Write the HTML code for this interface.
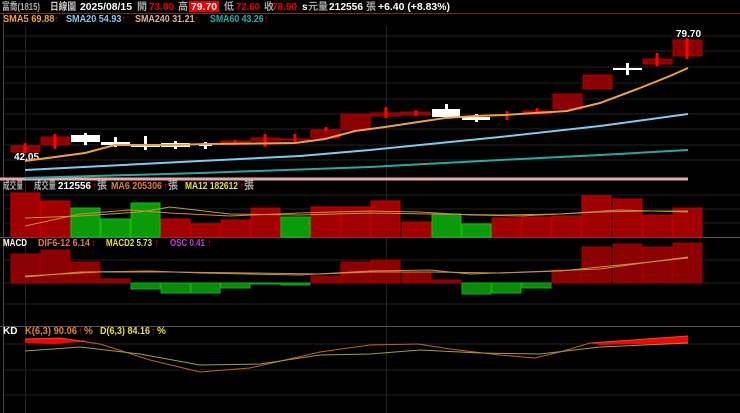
<!DOCTYPE html>
<html><head><meta charset="utf-8"><style>
html,body{margin:0;padding:0;background:#000;width:740px;height:413px;overflow:hidden}
svg{display:block}
text{font-family:"Liberation Sans","Noto Sans CJK TC",sans-serif;font-size:10px;font-weight:bold}
</style></head><body>
<svg width="740" height="413" viewBox="0 0 740 413">
<rect width="740" height="413" fill="#000"/>
<!-- header -->
<text x="2" y="10" fill="#aaa" font-weight="normal" font-size="9" textLength="38" lengthAdjust="spacingAndGlyphs">富喬(1815)</text>
<text x="50" y="10" fill="#ccc" font-weight="normal" textLength="26" lengthAdjust="spacingAndGlyphs">日線圖</text>
<text x="80" y="10" fill="#fff" font-size="11" textLength="52" lengthAdjust="spacingAndGlyphs">2025/08/15</text>
<text x="137" y="10" fill="#aaa" font-weight="normal">開</text>
<text x="149" y="10" fill="#e00" font-size="11" textLength="25" lengthAdjust="spacingAndGlyphs">73.80</text>
<text x="178" y="10" fill="#aaa" font-weight="normal">高</text>
<rect x="189" y="1" width="30" height="11" fill="#e00"/>
<text x="191" y="10" fill="#fff" font-size="11" textLength="26" lengthAdjust="spacingAndGlyphs">79.70</text>
<text x="224" y="10" fill="#aaa" font-weight="normal">低</text>
<text x="236" y="10" fill="#e00" font-size="11" textLength="24" lengthAdjust="spacingAndGlyphs">72.60</text>
<text x="264" y="10" fill="#aaa" font-weight="normal">收</text>
<text x="272" y="10" fill="#e00" font-size="11" textLength="25" lengthAdjust="spacingAndGlyphs">78.90</text>
<text x="302" y="10" fill="#fff">s</text>
<text x="308" y="10" fill="#aaa" font-weight="normal">元</text>
<text x="318" y="10" fill="#aaa" font-weight="normal">量</text>
<text x="329" y="10" fill="#fff" font-size="11" textLength="34" lengthAdjust="spacingAndGlyphs">212556</text>
<text x="366" y="10" fill="#aaa" font-weight="normal">張</text>
<text x="378" y="10" fill="#fff" font-size="11" textLength="72" lengthAdjust="spacingAndGlyphs">+6.40 (+8.83%)</text>
<line x1="0" y1="13.5" x2="740" y2="13.5" stroke="#7a2a2a"/>
<text x="3" y="22" fill="#f0a040" font-size="9.5" textLength="56" lengthAdjust="spacingAndGlyphs">SMA5 69.88<tspan fill="#e00">↑</tspan></text>
<text x="66" y="22" fill="#7ecbf0" font-size="9.5" textLength="60" lengthAdjust="spacingAndGlyphs">SMA20 54.93<tspan fill="#e00">↑</tspan></text>
<text x="135" y="22" fill="#e0b0a0" font-size="9.5" textLength="64" lengthAdjust="spacingAndGlyphs">SMA240 31.21<tspan fill="#e00">↑</tspan></text>
<text x="210" y="22" fill="#2ab0a8" font-size="9.5" textLength="58" lengthAdjust="spacingAndGlyphs">SMA60 43.26<tspan fill="#e00">↑</tspan></text>
<!-- grid -->
<g stroke="#222" stroke-width="1">
<line x1="3" y1="36" x2="740" y2="36"/><line x1="3" y1="51" x2="740" y2="51"/><line x1="3" y1="67" x2="740" y2="67"/><line x1="3" y1="83" x2="740" y2="83"/><line x1="3" y1="99" x2="740" y2="99"/><line x1="3" y1="114" x2="740" y2="114"/><line x1="3" y1="129" x2="740" y2="129"/><line x1="3" y1="145" x2="740" y2="145"/><line x1="3" y1="160" x2="740" y2="160"/>
<line x1="3" y1="209" x2="740" y2="209"/><line x1="3" y1="223" x2="740" y2="223"/><line x1="3" y1="195" x2="740" y2="195"/>
<line x1="3" y1="260" x2="740" y2="260"/><line x1="3" y1="283" x2="740" y2="283"/><line x1="3" y1="304" x2="740" y2="304"/>
<line x1="3" y1="344" x2="740" y2="344"/><line x1="3" y1="370" x2="740" y2="370"/><line x1="3" y1="395" x2="740" y2="395"/>
<line x1="25.5" y1="26" x2="25.5" y2="413"/><line x1="386.5" y1="26" x2="386.5" y2="413"/>
</g>
<line x1="3.5" y1="14" x2="3.5" y2="413" stroke="#444"/>
<line x1="0" y1="179" x2="688" y2="179" stroke="#e8a8a8" stroke-width="3"/>
<line x1="0" y1="237.5" x2="740" y2="237.5" stroke="#555"/>
<line x1="0" y1="326.5" x2="740" y2="326.5" stroke="#555"/>
<!-- candles -->
<g fill="#8b0000" stroke="#b00000" stroke-width="1">
<rect x="11" y="146" width="29" height="6"/><rect x="41" y="137" width="29" height="8"/>
<rect x="221" y="141" width="29" height="2"/><rect x="251" y="138" width="29" height="3"/><rect x="281" y="139" width="29" height="1"/>
<rect x="311" y="130" width="29" height="8"/><rect x="341" y="114" width="29" height="16"/><rect x="371" y="113" width="29" height="3"/><rect x="401" y="112" width="29" height="3"/><rect x="523" y="111" width="28" height="3"/><rect x="553" y="94" width="29" height="15"/><rect x="583" y="75" width="29" height="14"/><rect x="643" y="59" width="29" height="5"/><rect x="673" y="40" width="29" height="16"/>
</g>
<g stroke="#f00" stroke-width="3">
<line x1="25" y1="143" x2="25" y2="153"/><line x1="55" y1="134" x2="55" y2="149"/><line x1="235" y1="140" x2="235" y2="145"/><line x1="265" y1="134" x2="265" y2="147"/><line x1="295" y1="134" x2="295" y2="142"/><line x1="326" y1="127" x2="326" y2="131"/><line x1="386" y1="107" x2="386" y2="118"/><line x1="416" y1="110" x2="416" y2="116"/><line x1="507" y1="111" x2="507" y2="120"/><line x1="537" y1="108" x2="537" y2="112"/><line x1="657" y1="53" x2="657" y2="66"/><line x1="687" y1="38" x2="687" y2="59"/>
</g>
<g fill="#fff">
<rect x="71" y="135" width="29" height="7"/><rect x="84" y="133" width="3" height="12"/>
<rect x="101" y="142" width="29" height="3"/><rect x="114" y="137" width="3" height="10"/>
<rect x="131" y="145" width="29" height="2"/><rect x="144" y="136" width="3" height="14"/>
<rect x="161" y="143" width="29" height="4"/><rect x="174" y="141" width="3" height="8"/>
<rect x="204" y="142" width="3" height="7"/><rect x="199" y="145" width="13" height="1"/>
<rect x="432" y="109" width="28" height="8"/><rect x="445" y="104" width="3" height="13"/>
<rect x="462" y="117" width="28" height="3"/><rect x="475" y="114" width="3" height="8"/>
<rect x="613" y="68" width="29" height="2"/><rect x="626" y="63" width="3" height="12"/>
</g>
<text x="14" y="160" fill="#fff" font-weight="normal" font-size="9">42.05</text>
<text x="676" y="37" fill="#fff" font-weight="normal" font-size="9">79.70</text>
<!-- MAs -->
<polyline fill="none" stroke="#2aa8a0" stroke-width="2" points="25,178 200,173 370,167 500,160 600,155 688,150"/>
<polyline fill="none" stroke="#7ecbf0" stroke-width="2" points="25,170 200,161 300,156 370,150 500,137 600,126 688,114"/>
<polyline fill="none" stroke="#f0a040" stroke-width="2" points="25,161 85,153 115,145 175,145 205,144 295,143 325,139 355,131 385,127 445,118 475,116 505,115 535,113 567,111 600,103 640,88 670,76 688,68"/>
<!-- volume -->
<text x="3" y="189" fill="#aaa" font-weight="normal" font-size="8" textLength="20" lengthAdjust="spacingAndGlyphs">成交量</text>
<text x="34" y="189" fill="#aaa" font-weight="normal" font-size="9" textLength="22" lengthAdjust="spacingAndGlyphs">成交量</text>
<text x="58" y="189" fill="#fff" font-size="9" textLength="33" lengthAdjust="spacingAndGlyphs">212556</text>
<text x="92" y="189" fill="#e00" font-size="9">↑</text><text x="97" y="189" fill="#aaa" font-size="8">張</text>
<text x="111" y="189" fill="#e08040" font-size="9" textLength="51" lengthAdjust="spacingAndGlyphs">MA6 205306</text>
<text x="163" y="189" fill="#e00" font-size="9">↑</text><text x="168" y="189" fill="#aaa" font-size="8">張</text>
<text x="185" y="189" fill="#e8e040" font-size="9" textLength="53" lengthAdjust="spacingAndGlyphs">MA12 182612</text>
<text x="239" y="189" fill="#e00" font-size="9">↑</text><text x="244" y="189" fill="#aaa" font-size="8">張</text>
<g fill="#a00000" stroke="#c00000">
<rect x="11" y="193" width="29" height="44"/><rect x="41" y="201" width="29" height="36"/><rect x="161" y="219" width="29" height="18"/><rect x="191" y="224" width="29" height="13"/><rect x="221" y="220" width="29" height="17"/><rect x="251" y="208" width="29" height="29"/><rect x="311" y="207" width="29" height="30"/><rect x="341" y="207" width="29" height="30"/><rect x="371" y="201" width="29" height="36"/><rect x="402" y="222" width="29" height="15"/><rect x="492" y="218" width="29" height="19"/><rect x="522" y="217" width="29" height="20"/><rect x="552" y="216" width="29" height="21"/><rect x="582" y="196" width="29" height="41"/><rect x="613" y="199" width="29" height="38"/><rect x="643" y="215" width="29" height="22"/><rect x="673" y="208" width="29" height="29"/>
</g>
<g fill="#0a9a0a" stroke="#10c010">
<rect x="71" y="208" width="29" height="29"/><rect x="101" y="219" width="29" height="18"/><rect x="131" y="203" width="29" height="34"/><rect x="281" y="217" width="29" height="20"/><rect x="432" y="214" width="29" height="23"/><rect x="462" y="224" width="29" height="13"/>
</g>
<polyline fill="none" stroke="#e08040" stroke-width="1" points="25,226 80,214 130,210 170,213 230,216 300,213 370,211 420,212 470,215 520,216 560,214 600,212 650,211 688,211"/>
<polyline fill="none" stroke="#b0a030" stroke-width="1" points="25,218 80,216 140,212 170,207 230,214 300,215 370,213 430,214 500,215 560,214 620,210 688,212"/>
<!-- MACD -->
<text x="3" y="246" fill="#fff" font-size="9" textLength="24" lengthAdjust="spacingAndGlyphs">MACD</text>
<text x="38" y="246" fill="#e08040" font-size="9" textLength="52" lengthAdjust="spacingAndGlyphs">DIF6-12 6.14</text><text x="91" y="246" fill="#e00" font-size="9">↑</text>
<text x="106" y="246" fill="#e8e040" font-size="9" textLength="46" lengthAdjust="spacingAndGlyphs">MACD2 5.73</text><text x="154" y="246" fill="#e00" font-size="9">↑</text>
<text x="170" y="246" fill="#c040e0" font-size="9" textLength="35" lengthAdjust="spacingAndGlyphs">OSC 0.41</text><text x="207" y="246" fill="#e00" font-size="9">↑</text>
<g fill="#8b0000" stroke="#a00000">
<rect x="11" y="254" width="29" height="29"/><rect x="41" y="250" width="29" height="33"/><rect x="71" y="262" width="29" height="21"/><rect x="101" y="279" width="29" height="4"/><rect x="311" y="276" width="29" height="7"/><rect x="341" y="262" width="29" height="21"/><rect x="371" y="260" width="29" height="23"/><rect x="402" y="272" width="29" height="11"/><rect x="432" y="280" width="29" height="3"/><rect x="552" y="270" width="29" height="13"/><rect x="582" y="247" width="29" height="36"/><rect x="613" y="244" width="29" height="39"/><rect x="643" y="247" width="29" height="36"/><rect x="673" y="243" width="29" height="40"/>
</g>
<g fill="#0a8a0a" stroke="#10b010">
<rect x="131" y="283" width="29" height="6"/><rect x="161" y="283" width="29" height="10"/><rect x="191" y="283" width="29" height="10"/><rect x="221" y="283" width="29" height="5"/><rect x="251" y="283" width="29" height="1"/><rect x="281" y="283" width="29" height="2"/><rect x="462" y="283" width="29" height="11"/><rect x="492" y="283" width="29" height="10"/><rect x="522" y="283" width="29" height="5"/>
</g>
<polyline fill="none" stroke="#e08040" stroke-width="1" points="25,277 80,272 150,271 200,273 300,275 370,271 430,270 470,274 550,271 600,269 650,262 688,257"/>
<polyline fill="none" stroke="#b0a030" stroke-width="1" points="25,276 100,272 170,272 250,273 320,274 370,272 430,272 500,273 560,271 620,265 688,258"/>
<!-- KD -->
<text x="3" y="334" fill="#fff" font-size="9">KD</text>
<text x="25" y="334" fill="#e08040" font-size="9" textLength="52" lengthAdjust="spacingAndGlyphs">K(6,3) 90.06</text><text x="78" y="334" fill="#e00" font-size="9">↑</text><text x="84" y="334" fill="#e08040" font-size="9">%</text>
<text x="100" y="334" fill="#e8e040" font-size="9" textLength="50" lengthAdjust="spacingAndGlyphs">D(6,3) 84.16</text><text x="151" y="334" fill="#e00" font-size="9">↑</text><text x="157" y="334" fill="#e8e040" font-size="9">%</text>
<polygon fill="#f00" points="25,339 55,338 90,341 55,344 25,343"/>
<polygon fill="#f00" points="590,343 688,336 688,343 600,345"/>
<polyline fill="none" stroke="#c06030" stroke-width="1" points="25,339 60,338 100,344 150,360 200,372 250,368 320,352 370,345 418,344 450,349 500,355 535,358 560,352 590,343 688,336"/>
<polyline fill="none" stroke="#a0a030" stroke-width="1" points="25,351 80,347 140,354 200,365 260,364 320,355 370,354 420,350 480,353 540,354 600,347 688,343"/>
</svg>
</body></html>
